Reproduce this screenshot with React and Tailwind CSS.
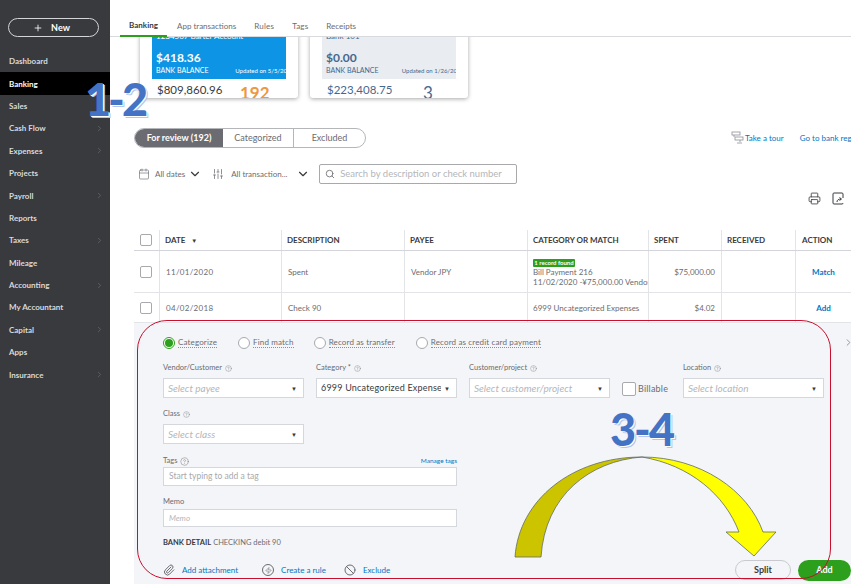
import { ChevronRight, ChevronDown, Calendar, SlidersVertical, Search, Printer, Paperclip, Zap, Ban, Plus, CircleHelp } from "lucide-react";

const navItems = [
  ["Dashboard", false],
  ["Banking", false],
  ["Sales", false],
  ["Cash Flow", true],
  ["Expenses", true],
  ["Projects", false],
  ["Payroll", true],
  ["Reports", false],
  ["Taxes", true],
  ["Mileage", false],
  ["Accounting", true],
  ["My Accountant", false],
  ["Capital", true],
  ["Apps", false],
  ["Insurance", true],
];

const Sidebar = () => (
  <div className="w-[110px] shrink-0 bg-[#393a3d] h-full pt-[18px]">
    <div className="mx-2 w-[91px] h-[19px] rounded-full border border-[#d4d5d8] flex items-center justify-center gap-2 pr-[4px] text-white text-[9px] font-bold">
      <Plus size={10} strokeWidth={2} /> New
    </div>
    <div className="mt-[13px]">
      {navItems.map(([name, arrow]) => (
        <div
          key={name}
          className={`h-[22.4px] pl-[9px] pr-[6px] flex items-center justify-between text-[8px] font-bold ${
            name === "Banking" ? "bg-black text-white" : "text-[#d8d9dc]"
          }`}
        >
          {name}
          {arrow && <ChevronRight size={9} className="text-[#66676b]" />}
        </div>
      ))}
    </div>
  </div>
);

const Tabs = () => (
  <div className="relative z-10 h-[37px] bg-white border-b border-[#d9dadd] flex items-end pl-[10px] text-[8px] text-[#6b6c72]">
    <div className="w-[47px] h-[37px] -mb-px border-b-2 border-[#2ca01c] flex items-center justify-center pt-[15px] font-bold text-[#393a3d]">Banking</div>
    <div className="ml-[10px] h-[36px] pt-[15px] flex items-center">App transactions</div>
    <div className="ml-[18px] h-[36px] pt-[15px] flex items-center tracking-[0.2px]">Rules</div>
    <div className="ml-[18px] h-[36px] pt-[15px] flex items-center tracking-[0.2px]">Tags</div>
    <div className="ml-[18px] h-[36px] pt-[15px] flex items-center">Receipts</div>
  </div>
);

const BankCard = ({ title, balance, updated, amount, count, blue }) => (
  <div className="w-[158px] h-[69px] bg-white rounded-b-[3px] shadow-[0_1px_4px_rgba(0,0,0,0.35)] overflow-hidden px-3">
    <div className={`h-[50px] px-[4px] overflow-hidden ${blue ? "bg-[#0d94e4] text-white" : "bg-[#e9ecf0] text-[#46688f]"}`}>
      <div className="text-[8px] h-[21px] pt-[2px] leading-[10px]">{title}</div>
      <div className="text-[12px] font-bold leading-[16px]">{balance}</div>
      <div className="flex justify-between items-center whitespace-nowrap leading-[9px]">
        <span className="text-[7px]">BANK BALANCE</span>
        <span className="text-[6px] -mr-3">{updated}</span>
      </div>
    </div>
    <div className="flex px-[5px] pt-[3px]">
      <div className={`w-[83px] ${blue ? "text-[#393a3d]" : "text-[#46688f]"}`}>
        <div className="text-[11.5px] leading-[15px] whitespace-nowrap">{amount}</div>
        <div className="text-[7px] leading-[9px] whitespace-nowrap">IN QUICKBOOKS</div>
      </div>
      <div className={`text-[17px] leading-[20px] pt-[1px] font-bold ${blue ? "text-[#f0963c]" : "text-[#46688f] font-normal pl-[13px]"}`}>{count}</div>
    </div>
  </div>
);

const tableCols = "grid grid-cols-[25px_122px_123px_123px_121px_73px_74px_56px]";

const Cell = ({ children, className = "" }) => (
  <div className={`border-l border-[#e3e4e8] flex items-center overflow-hidden whitespace-nowrap ${className}`}>{children}</div>
);

const Box = ({ size = "w-[12px] h-[12px]" }) => (
  <span className={`${size} block bg-white border border-[#a8a9ad] rounded-[2px]`}></span>
);

const Table = () => (
  <div className="ml-[24px] w-[741px] text-[8px] text-[#6b6c72]">
    <div className={`${tableCols} h-[21px] border-b border-[#d4d5da] font-bold text-[#393a3d]`}>
      <div className="flex items-center pl-[6px]"><Box /></div>
      <Cell className="pl-[5px] gap-[6px]">DATE <span className="text-[6px]">▼</span></Cell>
      <Cell className="pl-[5px]">DESCRIPTION</Cell>
      <Cell className="pl-[5px]">PAYEE</Cell>
      <Cell className="pl-[5px]">CATEGORY OR MATCH</Cell>
      <Cell className="pl-[5px]">SPENT</Cell>
      <Cell className="pl-[5px]">RECEIVED</Cell>
      <Cell className="pl-[6px]">ACTION</Cell>
    </div>
    <div className={`${tableCols} h-[42px] border-b border-[#e3e4e8]`}>
      <div className="flex items-center pl-[6px]"><Box /></div>
      <Cell className="pl-[6px] tracking-[0.3px]">11/01/2020</Cell>
      <Cell className="pl-[6px]">Spent</Cell>
      <Cell className="pl-[6px]">Vendor JPY</Cell>
      <Cell className="pl-[5px]">
        <div className="leading-[10px] pt-[3px]">
          <div className="w-[42px] h-[8px] bg-[#2ca01c] text-white text-[6px] font-bold leading-[8px] text-center rounded-[1px]">1 record found</div>
          <div>Bill Payment 216</div>
          <div>11/02/2020 -¥75,000.00 Vendor</div>
        </div>
      </Cell>
      <Cell className="justify-end pr-[6px]">$75,000.00</Cell>
      <Cell></Cell>
      <Cell className="justify-center font-bold text-[#0077c5]">Match</Cell>
    </div>
    <div className={`${tableCols} h-[29px]`}>
      <div className="flex items-center pl-[6px]"><Box /></div>
      <Cell className="pl-[6px] tracking-[0.3px]">04/02/2018</Cell>
      <Cell className="pl-[6px]">Check 90</Cell>
      <Cell></Cell>
      <Cell className="pl-[5px]">6999 Uncategorized Expenses</Cell>
      <Cell className="justify-end pr-[6px]">$4.02</Cell>
      <Cell></Cell>
      <Cell className="justify-center font-bold text-[#0077c5]">Add</Cell>
    </div>
  </div>
);

const Radio = ({ label, checked }) => (
  <div className="flex items-center gap-[3px] text-[8px] tracking-[0.15px] text-[#6b6c72]">
    {checked ? (
      <span className="w-[12px] h-[12px] rounded-full border border-[#2ca01c] bg-white flex items-center justify-center">
        <span className="w-[8px] h-[8px] rounded-full bg-[#2ca01c]"></span>
      </span>
    ) : (
      <span className="w-[12px] h-[12px] rounded-full border border-[#a8a9ad] bg-white"></span>
    )}
    <span className="border-b border-dotted border-[#8d9096] leading-[10px]">{label}</span>
  </div>
);

const Label = ({ children, big }) => (
  <div className="flex items-center gap-[3px] h-[10px] text-[7.5px] text-[#6b6c72] whitespace-nowrap">
    {children}
    <CircleHelp size={big ? 9 : 7} strokeWidth={1.2} />
  </div>
);

const Select = ({ value, placeholder }) => (
  <div className="w-[141px] h-[20px] bg-white border border-[#d4d7dc] flex items-center justify-between pl-[4px] pr-[6px] whitespace-nowrap">
    <span className={value ? "text-[9px] tracking-[0.2px] text-[#393a3d] w-[120px] overflow-hidden" : "text-[10px] italic text-[#b4b6ba]"}>{value || placeholder}</span>
    <span className="text-[6px] text-[#393a3d]">▼</span>
  </div>
);

const Panel = () => (
  <div className="ml-[24px] h-[262px] bg-[#f4f5f8] pl-[29px] border-t border-[#e3e4e8]">
    <div className="flex items-center h-[40px] pb-[1px]">
      <Radio label="Categorize" checked />
      <div className="ml-[21px]"><Radio label="Find match" /></div>
      <div className="ml-[20px]"><Radio label="Record as transfer" /></div>
      <div className="ml-[21px]"><Radio label="Record as credit card payment" /></div>
      <ChevronRight size={11} className="ml-auto mr-[-3px] text-[#8d9096]" />
    </div>
    <div className="flex items-end">
      <div>
        <Label>Vendor/Customer</Label>
        <div className="mt-[5px]"><Select placeholder="Select payee" /></div>
      </div>
      <div className="ml-[12px]">
        <Label>Category *</Label>
        <div className="mt-[5px]"><Select value="6999 Uncategorized Expense" /></div>
      </div>
      <div className="ml-[12px]">
        <Label>Customer/project</Label>
        <div className="mt-[5px]"><Select placeholder="Select customer/project" /></div>
      </div>
      <div className="ml-[12px] w-[44px] h-[20px] flex items-center gap-[2px] text-[9px] tracking-[0.2px] text-[#6b6c72] pt-[2px]">
        <Box size="w-[14px] h-[14px] shrink-0" /> Billable
      </div>
      <div className="ml-[17px]">
        <Label>Location</Label>
        <div className="mt-[5px]"><Select placeholder="Select location" /></div>
      </div>
    </div>
    <div className="mt-[11px]">
      <Label>Class</Label>
      <div className="mt-[5px]"><Select placeholder="Select class" /></div>
    </div>
    <div className="w-[294px] mt-[11px]">
      <div className="flex justify-between items-center h-[12px]">
        <Label big>Tags</Label>
        <span className="text-[6.5px] text-[#0077c5]">Manage tags</span>
      </div>
      <div className="h-[19px] bg-white border border-[#d4d7dc] pl-[5px] flex items-center text-[8.5px] text-[#a8a9ad]">Start typing to add a tag</div>
    </div>
    <div className="w-[294px] mt-[11px]">
      <div className="h-[10px] flex items-center text-[7.5px] text-[#6b6c72]">Memo</div>
      <div className="mt-[2px] h-[18px] bg-white border border-[#d4d7dc] pl-[5px] flex items-center text-[8px] italic text-[#b4b6ba]">Memo</div>
    </div>
    <div className="mt-[10px] h-[12px] flex items-center text-[7.5px] text-[#6b6c72] whitespace-nowrap gap-[2px]">
      <span className="font-bold text-[#393a3d]">BANK DETAIL</span> CHECKING debit 90
    </div>
    <div className="mt-[9px] flex items-center h-[24px]">
      <div className="flex items-center text-[8px] text-[#0077c5]">
        <Paperclip size={12} className="text-[#6b6c72] mr-[7px]" /> Add attachment
      </div>
      <div className="ml-[24px] flex items-center text-[8px] text-[#0077c5]">
        <span className="w-[12px] h-[12px] rounded-full border border-[#6b6c72] flex items-center justify-center mr-[7px]"><Zap size={7} className="text-[#6b6c72]" /></span> Create a rule
      </div>
      <div className="ml-[18px] flex items-center text-[8px] text-[#0077c5]">
        <Ban size={12} className="text-[#6b6c72] mr-[7px]" /> Exclude
      </div>
      <div className="ml-auto flex items-center gap-[7px]">
        <div className="w-[56px] h-[20px] rounded-full border border-[#c9cacd] flex items-center justify-center text-[9px] font-bold text-[#393a3d]">Split</div>
        <div className="w-[53px] h-[21px] rounded-full bg-[#2ca01c] flex items-center justify-center text-[9px] font-bold text-white">Add</div>
      </div>
    </div>
  </div>
);

const Overlays = () => (
  <>
    <div className="absolute left-[85px] top-[74px] text-[45px] leading-[50px] tracking-[-3px] font-black text-[#4472c4] [text-shadow:1px_1px_0_#fff,2px_2px_0_#b4c7e7]">1-2</div>
    <div className="absolute left-[610px] top-[404px] text-[45px] leading-[50px] tracking-[-2px] font-black text-[#4472c4] [text-shadow:1px_1px_0_#fff,2px_2px_0_#b4c7e7]">3-4</div>
    <div className="absolute left-[137px] top-[320px] w-[694px] h-[259px] rounded-[30px] border border-[#c8102e]"></div>
    <svg className="absolute left-0 top-0" width="851" height="584" viewBox="0 0 851 584">
      <path d="M515 557 C519 500 572 457 642 457 C590 461 545 495 541 557 Z" fill="#cdc400" stroke="#5f6b66" strokeWidth="0.8" />
      <path d="M642 457 C700 457 748 490 763 532 L776 532 L754 556 L726 532 L739 532 C725 495 690 465 642 457 Z" fill="#ffff00" stroke="#5f6b66" strokeWidth="0.8" />
    </svg>
  </>
);

const App = () => (
  <div className="relative w-[851px] h-[584px] overflow-hidden flex bg-white font-['Lato',sans-serif]">
    <Sidebar />
    <div className="flex-1 min-w-0">
      <Tabs />
      <div className="-mt-[8px] ml-[30px] flex gap-[12px] h-[69px]">
        <BankCard blue title="1234567 Barter Account" balance="$418.36" updated="Updated on 5/5/2020" amount="$809,860.96" count="192" />
        <BankCard title="Bank 101" balance="$0.00" updated="Updated on 1/26/2020" amount="$223,408.75" count="3" />
      </div>
      <div className="mt-[30px] ml-[24px] flex items-center whitespace-nowrap">
        <div className="flex h-[20px] w-[232px] rounded-full border border-[#b4b6ba] overflow-hidden text-[9px] text-[#6b6c72]">
          <div className="w-[88px] bg-[#6b6c72] text-white font-bold flex items-center justify-center">For review (192)</div>
          <div className="w-[71px] flex items-center justify-center border-r border-[#b4b6ba]">Categorized</div>
          <div className="flex-1 flex items-center justify-center">Excluded</div>
        </div>
        <div className="ml-auto flex items-center text-[8px] text-[#0077c5] overflow-hidden w-[120px] shrink-0">
          <svg width="14" height="14" viewBox="0 0 14 14" fill="none" stroke="#8d9096" strokeWidth="0.8" className="shrink-0">
            <rect x="1" y="1" width="8" height="3" />
            <rect x="4" y="6" width="8" height="3" />
            <path d="M3 4v2M9 9v2M6 12h5" />
          </svg>
          <span>Take a tour</span>
          <span className="ml-[16px]">Go to bank register</span>
        </div>
      </div>
      <div className="mt-[16px] ml-[28px] flex items-center h-[20px] text-[8px] text-[#6b6c72] whitespace-nowrap">
        <Calendar size={12} strokeWidth={1.3} />
        <span className="ml-[5px]">All dates</span>
        <ChevronDown size={14} className="ml-[3px] text-[#393a3d]" />
        <SlidersVertical size={12} strokeWidth={1.5} className="ml-[10px]" />
        <span className="ml-[7px] w-[63px]">All transaction...</span>
        <ChevronDown size={14} className="ml-[2px] text-[#393a3d]" />
        <div className="ml-[9px] w-[198px] h-[20px] border border-[#a8a9ad] rounded-[2px] flex items-center pl-[5px] gap-[5px] text-[9.5px] text-[#b4b6ba]">
          <Search size={10} className="text-[#6b6c72]" /> Search by description or check number
        </div>
      </div>
      <div className="mt-[6px] h-[16px] flex items-center justify-end gap-[11px] pr-[7px] text-[#393a3d]">
        <Printer size={13} strokeWidth={1.5} />
        <svg width="12" height="13" viewBox="0 0 12 13" fill="none" stroke="#393a3d" strokeWidth="1">
          <path d="M11 6V2a1 1 0 0 0-1-1H2a1 1 0 0 0-1 1v9a1 1 0 0 0 1 1h8a1 1 0 0 0 1-1" />
          <path d="M5 10c0-2 1.500-3 4-3M7.500 5.500L9.500 7 7.500 8.500" />
        </svg>
      </div>
      <div className="mt-[24px]">
        <Table />
        <Panel />
      </div>
    </div>
    <Overlays />
  </div>
);

export default App;
